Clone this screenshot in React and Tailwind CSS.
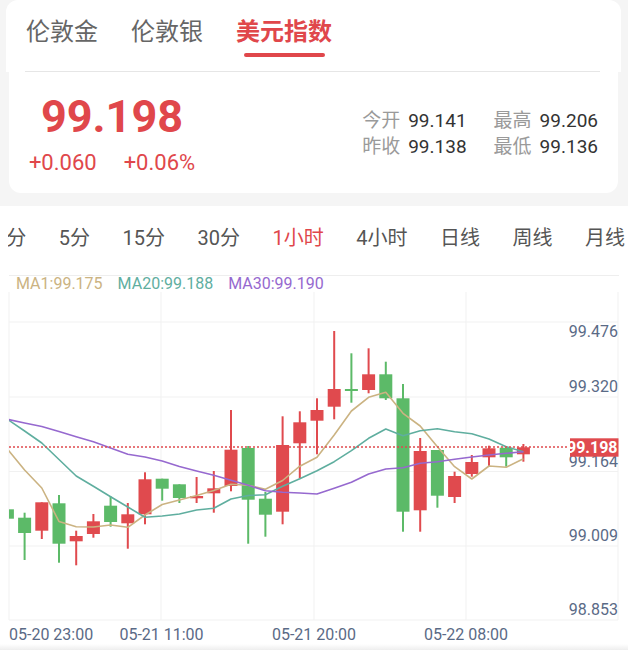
const FONT = "font-[Roboto,'Noto_Sans_CJK_SC',sans-serif]";
const SVG_FONT = "Roboto, 'Noto Sans CJK SC', sans-serif";
const RED = '#e04a4e';
const GREEN = '#5cba68';
const AXIS = '#5a6a86';

// [type, bodyTop, bodyBottom, wickTop, wickBottom] in chart pixels
const CANDLES = [
    ['g', 509.3, 518.7, 509.3, 518.7],
    ['g', 517.7, 533, 512.7, 560],
    ['r', 502.3, 530.7, 502.3, 539],
    ['g', 503.3, 543.7, 495, 562.7],
    ['r', 536, 541.3, 530.7, 565.3],
    ['r', 521.3, 534, 514, 537.7],
    ['g', 505.7, 522, 496.3, 526.7],
    ['r', 514.3, 523.3, 503, 548.7],
    ['r', 479.3, 514.3, 472.3, 524.3],
    ['g', 478.7, 488.7, 478.7, 500.7],
    ['g', 484.3, 498, 484.3, 503],
    ['r', 496, 498.3, 477, 503],
    ['r', 488.3, 493.3, 471, 512.7],
    ['r', 449.7, 486, 410, 491.3],
    ['g', 448, 499.7, 446, 543.7],
    ['g', 498.7, 514.7, 492, 536.7],
    ['r', 445, 511.7, 416.3, 524.3],
    ['r', 422.3, 443.3, 411.3, 478.3],
    ['r', 410, 420.7, 398.3, 454.3],
    ['r', 389, 406.7, 331, 419.3],
    ['g', 389, 390.7, 353.3, 402.7],
    ['r', 374.3, 390, 348.3, 393.3],
    ['g', 374.3, 398.3, 361.7, 400],
    ['g', 398.3, 511.7, 384, 531.7],
    ['r', 451, 510.3, 438, 531.7],
    ['g', 450, 495.7, 450, 507.7],
    ['r', 476, 497, 471.7, 503],
    ['r', 462, 474, 455, 476.7],
    ['r', 448.3, 457.3, 445.7, 466],
    ['g', 447.7, 457.3, 446, 466.7],
    ['r', 447.3, 454.3, 444, 461.7],
];

const MA1 = [449, 470, 488, 521.5, 526.7, 527, 525, 527.3, 515, 504.5, 500, 495.5, 490.5, 484.2, 485.3, 489.3, 480.5, 466.2, 457.3, 435, 411, 397.3, 392.3, 413.3, 426, 446.7, 466.7, 479, 466, 467.3, 458.7];
const MA20 = [419.3, 431, 443, 459.5, 476, 486.3, 496.7, 507, 517.3, 516, 514, 510, 508.3, 499, 495.5, 494.8, 486.3, 478.8, 470.7, 461.7, 450.7, 438.3, 429, 435.7, 430.7, 428.7, 431.7, 433.7, 439, 446.7, 451.7];
const MA30 = [419.3, 423, 426.5, 431.5, 436.7, 441.7, 448, 454.2, 457, 461, 466.5, 471, 475.2, 480.3, 485.3, 490.8, 492.2, 493, 494, 488.3, 482.3, 474, 469, 467.7, 463.3, 461.7, 459.3, 457, 455, 453.3, 451.7];

const cx = (i) => 7.4 + 17.2 * i;
const pts = (arr) => arr.map((y, i) => `${cx(i).toFixed(1)},${y}`).join(' ');

const PERIODS = ['1分', '5分', '15分', '30分', '1小时', '4小时', '日线', '周线', '月线'];

const Y_LABELS = [
    { v: '99.476', y: 337.3 },
    { v: '99.320', y: 391.7 },
    { v: '99.164', y: 467.3 },
    { v: '99.009', y: 540.7 },
    { v: '98.853', y: 615 },
];

function Stat({ label, value }) {
    return (
        <div className="flex gap-[8px]">
            <span className="text-[#9a9a9a]">{label}</span>
            <span className="text-[#333333]">{value}</span>
        </div>
    );
}

function Chart() {
    return (
        <svg width="628" height="358" viewBox="0 292 628 358" className="block">
            <defs>
                <clipPath id="plot">
                    <rect x="9" y="292" width="609" height="328" />
                </clipPath>
                <linearGradient id="shade" x1="0" y1="0" x2="0" y2="1">
                    <stop offset="0" stopColor="#ffffff" />
                    <stop offset="1" stopColor="#eeeeee" />
                </linearGradient>
            </defs>

            {[322, 397, 471.5, 546, 620].map((y) => (
                <line key={y} x1="9" x2="618" y1={y} y2={y} stroke="#f1f1f1" strokeWidth="1" />
            ))}
            {[9, 161, 314, 466, 618].map((x) => (
                <line key={x} x1={x} x2={x} y1="292" y2="620" stroke="#f1f1f1" strokeWidth="1" />
            ))}

            <g clipPath="url(#plot)">
                {CANDLES.map(([t, bt, bb, wt, wb], i) => {
                    const x = cx(i);
                    const c = t === 'r' ? RED : GREEN;
                    return (
                        <g key={i}>
                            <rect x={x - 1} y={wt} width="2" height={wb - wt} fill={c} />
                            <rect x={x - 6.5} y={bt} width="13" height={Math.max(bb - bt, 2)} fill={c} />
                        </g>
                    );
                })}
                <polyline points={pts(MA1)} fill="none" stroke="#cbb382" strokeWidth="1.6" strokeLinejoin="round" />
                <polyline points={pts(MA20)} fill="none" stroke="#5fae9f" strokeWidth="1.6" strokeLinejoin="round" />
                <polyline points={pts(MA30)} fill="none" stroke="#9669cf" strokeWidth="1.6" strokeLinejoin="round" />
            </g>

            <line x1="9" x2="570" y1="447" y2="447" stroke={RED} strokeWidth="1.5" strokeDasharray="2 2" />

            <g fontFamily={SVG_FONT} fontSize="16" fill={AXIS} textAnchor="end">
                {Y_LABELS.map((l) => (
                    <text key={l.v} x="618" y={l.y}>{l.v}</text>
                ))}
            </g>

            <rect x="570" y="438.3" width="48.5" height="18.4" fill={RED} />
            <text x="617.5" y="453.3" fontFamily={SVG_FONT} fontSize="16" fontWeight="700" fill="#ffffff" textAnchor="end">99.198</text>

            <g fontFamily={SVG_FONT} fontSize="16" fill={AXIS}>
                <text x="9" y="640">05-20 23:00</text>
                <text x="161.5" y="640" textAnchor="middle">05-21 11:00</text>
                <text x="314" y="640" textAnchor="middle">05-21 20:00</text>
                <text x="466" y="640" textAnchor="middle">05-22 08:00</text>
            </g>

            <rect x="0" y="644" width="628" height="6" fill="url(#shade)" />
        </svg>
    );
}

export default function App() {
    return (
        <div className={`w-[628px] h-[650px] overflow-hidden bg-[#f5f5f5] flex flex-col ${FONT}`}>
            {/* product tabs */}
            <div className="ml-[6px] w-[615px] h-[72px] bg-white rounded-t-[12px] flex flex-col">
                <div className="flex gap-[33px] pl-[20px] pt-[20px]">
                    <div className="text-[24px] leading-[24px] text-[#666666]">伦敦金</div>
                    <div className="text-[24px] leading-[24px] text-[#666666]">伦敦银</div>
                    <div className="flex flex-col items-center">
                        <div className="text-[24px] leading-[24px] font-bold text-[#e0474b]">美元指数</div>
                        <div className="mt-[9px] w-[81px] h-[3.5px] rounded-full bg-[#e0474b]" />
                    </div>
                </div>
                <div className="mt-[14px] ml-[19px] mr-[21px] h-[1.5px] bg-[#e6e6e6]" />
            </div>

            {/* quote card */}
            <div className="ml-[9px] w-[609px] h-[121px] bg-white rounded-b-[12px] flex justify-between">
                <div className="ml-[3px] w-[200px] pt-[22px] flex flex-col items-center">
                    <div className="text-[45px] leading-[45px] font-bold text-[#e0474b]">99.198</div>
                    <div className="mt-[13px] flex gap-[27px] text-[22px] leading-[22px] text-[#e0474b]">
                        <span>+0.060</span>
                        <span>+0.06%</span>
                    </div>
                </div>
                <div className="pr-[20px] pt-[35.5px]">
                    <div className="grid grid-cols-[auto_auto] gap-x-[27px] text-[19px] leading-[26px]">
                        <Stat label="今开" value="99.141" />
                        <Stat label="最高" value="99.206" />
                        <Stat label="昨收" value="99.138" />
                        <Stat label="最低" value="99.136" />
                    </div>
                </div>
            </div>

            {/* chart section */}
            <div className="mt-[13px] flex-1 bg-white flex flex-col">
                <div className="h-[69px] pt-[17px] pl-[8px]">
                    <div className="h-[30px] overflow-hidden">
                        <div className="flex gap-[32.5px] ml-[-13px] whitespace-nowrap text-[20px] leading-[30px]">
                            {PERIODS.map((p) => (
                                <span key={p} className={p === '1小时' ? 'text-[#e0474b]' : 'text-[#555555]'}>{p}</span>
                            ))}
                        </div>
                    </div>
                </div>
                <div className="mx-[9px] h-px bg-[#eeeeee]" />
                <div className="h-[16px] pl-[16px] flex gap-[15px] text-[16px] leading-[16px]">
                    <span className="text-[#cbb382]">MA1:99.175</span>
                    <span className="text-[#5fae9f]">MA20:99.188</span>
                    <span className="text-[#9669cf]">MA30:99.190</span>
                </div>
                <Chart />
            </div>
        </div>
    );
}
